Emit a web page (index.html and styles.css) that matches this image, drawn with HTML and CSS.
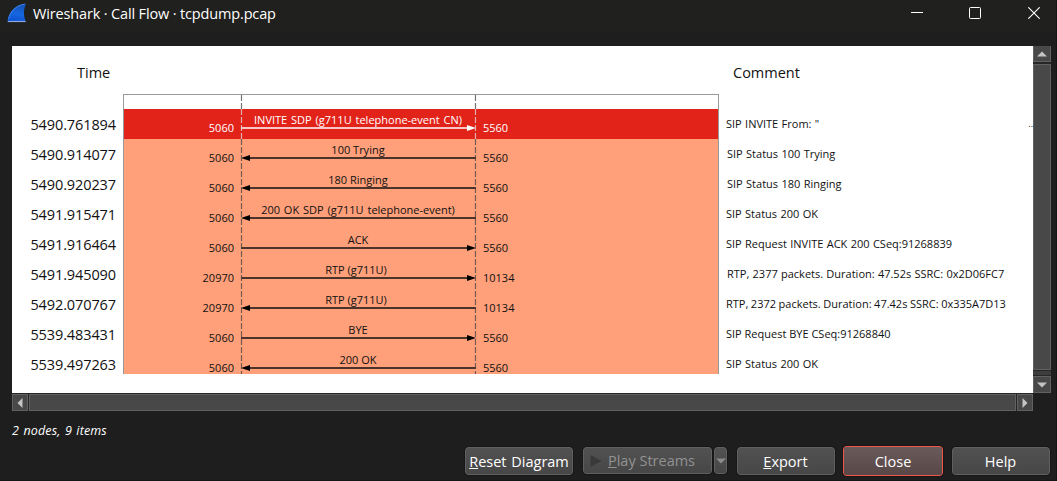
FILE: index.html
```html
<!DOCTYPE html>
<html lang="en">
<head>
<meta charset="utf-8">
<title>Wireshark · Call Flow · tcpdump.pcap</title>
<link rel="stylesheet" href="styles.css">
</head>
<body>
<div class="window">
  <header class="titlebar">
    <svg class="logo" width="20" height="20" viewBox="0 0 20 20"><defs><linearGradient id="fin" x1="0.6" y1="0" x2="0.4" y2="1"><stop offset="0" stop-color="#1450b4"/><stop offset=".55" stop-color="#1767e0"/><stop offset="1" stop-color="#0b4fd0"/></linearGradient></defs><path d="M.5 19C1.200 9.500 8 1.500 19.300.5C16.500 6 16 12 19 19Z" fill="url(#fin)"/><path d="M.8 18.500H18.600" stroke="#8fa9d8" stroke-width="1.200"/><path d="M1.500 16C3.500 8 9 2.500 17.500 1.200" fill="none" stroke="#4b8ff0" stroke-width=".8"/></svg>
    <h1 class="title">Wireshark · Call Flow · tcpdump.pcap</h1>
    <div class="controls">
      <svg width="12" height="12"><path d="M0 5.500H12" stroke="#fff"/></svg>
      <svg width="12" height="12"><rect x=".5" y=".5" width="11" height="11" rx="1" fill="none" stroke="#fff"/></svg>
      <svg width="12" height="12"><path d="M.3.300L11.700 11.700M11.700.300L.3 11.700" stroke="#fff" stroke-width="1.100"/></svg>
    </div>
  </header>

  <main class="view">
    <section class="diagram">
      <div class="heads"><span class="head-time">Time</span><span class="head-comment">Comment</span></div>
      <div class="flow">
        <div class="times">
          <span>5490.761894</span><span>5490.914077</span><span>5490.920237</span><span>5491.915471</span><span>5491.916464</span><span>5491.945090</span><span>5492.070767</span><span>5539.483431</span><span>5539.497263</span>
        </div>
        <div class="chart">
          <svg class="lifelines" width="240" height="280"><path class="life" d="M1.500 0V14M235.500 0V14M1.500 44V280M235.500 44V280"/><path class="life light" d="M1.500 14V44M235.500 14V44"/></svg>
          <div class="row selected"><span class="from">5060</span><div class="msg"><span class="m1">INVITE SDP (g711U telephone-event CN)</span><svg class="arrow" width="235" height="8"><path class="shaft" d="M0 4H229"/><path class="tip" d="M226 1L235 4L226 7Z"/></svg></div><span class="to">5560</span></div>
          <div class="row"><span class="from">5060</span><div class="msg"><span>100 Trying</span><svg class="arrow" width="235" height="8"><path class="shaft" d="M6 4H235"/><path class="tip" d="M9 1L0 4L9 7Z"/></svg></div><span class="to">5560</span></div>
          <div class="row"><span class="from">5060</span><div class="msg"><span>180 Ringing</span><svg class="arrow" width="235" height="8"><path class="shaft" d="M6 4H235"/><path class="tip" d="M9 1L0 4L9 7Z"/></svg></div><span class="to">5560</span></div>
          <div class="row"><span class="from">5060</span><div class="msg"><span class="m2">200 OK SDP (g711U telephone-event)</span><svg class="arrow" width="235" height="8"><path class="shaft" d="M6 4H235"/><path class="tip" d="M9 1L0 4L9 7Z"/></svg></div><span class="to">5560</span></div>
          <div class="row"><span class="from">5060</span><div class="msg"><span>ACK</span><svg class="arrow" width="235" height="8"><path class="shaft" d="M0 4H229"/><path class="tip" d="M226 1L235 4L226 7Z"/></svg></div><span class="to">5560</span></div>
          <div class="row"><span class="from">20970</span><div class="msg"><span class="m3">RTP (g711U)</span><svg class="arrow" width="235" height="8"><path class="shaft" d="M0 4H229"/><path class="tip" d="M226 1L235 4L226 7Z"/></svg></div><span class="to">10134</span></div>
          <div class="row"><span class="from">20970</span><div class="msg"><span class="m3">RTP (g711U)</span><svg class="arrow" width="235" height="8"><path class="shaft" d="M6 4H235"/><path class="tip" d="M9 1L0 4L9 7Z"/></svg></div><span class="to">10134</span></div>
          <div class="row"><span class="from">5060</span><div class="msg"><span>BYE</span><svg class="arrow" width="235" height="8"><path class="shaft" d="M0 4H229"/><path class="tip" d="M226 1L235 4L226 7Z"/></svg></div><span class="to">5560</span></div>
          <div class="row"><span class="from">5060</span><div class="msg"><span>200 OK</span><svg class="arrow" width="235" height="8"><path class="shaft" d="M6 4H235"/><path class="tip" d="M9 1L0 4L9 7Z"/></svg></div><span class="to">5560</span></div>
        </div>
        <div class="comments">
          <span class="split"><b>SIP INVITE From: "</b><b class="more">..</b></span><span class="nudge">SIP Status 100 Trying</span><span class="nudge">SIP Status 180 Ringing</span><span>SIP Status 200 OK</span><span>SIP Request INVITE ACK 200 CSeq:91268839</span><span class="nudge rtp">RTP, 2377 packets. Duration: 47.52s SSRC: 0x2D06FC7</span><span class="tight">RTP, 2372 packets. Duration: 47.42s SSRC: 0x335A7D13</span><span class="bye">SIP Request BYE CSeq:91268840</span><span>SIP Status 200 OK</span>
        </div>
      </div>
    </section>
    <div class="vbar">
      <div class="step up"><svg width="10" height="6"><path d="M0 5.500L5 .5L10 5.500Z"/></svg></div>
      <div class="thumb"></div>
      <div class="groove"></div>
      <div class="step down"><svg width="10" height="6"><path d="M0 .5L5 5.500L10 .5Z"/></svg></div>
    </div>
    <div class="hbar">
      <div class="step"><svg width="6" height="10"><path d="M5.500 0L.5 5L5.500 10Z"/></svg></div>
      <div class="thumb"></div>
      <div class="step"><svg width="6" height="10"><path d="M.5 0L5.500 5L.5 10Z"/></svg></div>
    </div>
  </main>

  <p class="status">2 nodes, 9 items</p>

  <footer class="buttons">
    <button class="btn reset"><span><u>R</u>eset Diagram</span></button>
    <button class="btn play"><svg width="12" height="12"><path d="M.5 0L11.500 6L.5 12Z"/></svg><span><u>P</u>lay Streams</span></button>
    <button class="btn drop"><svg width="10" height="6"><path d="M0 .5L5 5.500L10 .5Z"/></svg></button>
    <button class="btn export"><span><u>E</u>xport</span></button>
    <button class="btn close"><span>Close</span></button>
    <button class="btn help"><span>Help</span></button>
  </footer>
</div>
</body>
</html>
```
FILE: styles.css
```css
* { box-sizing: border-box; }
body { margin: 0; background: #1e1e1e; font-family: "Open Sans", "Noto Sans", sans-serif; }
svg { display: block; flex: none; }
.window { width: 1057px; height: 481px; overflow: hidden; display: flex; flex-direction: column; border-right: 1px solid #151515; border-bottom: 1px solid #151515; }

.titlebar { height: 32px; flex: none; display: flex; align-items: flex-start; padding: 3px 16px 0 7px; background: #20201e; }
.title { margin: 1px 0 0 6px; font-size: 14.5px; font-weight: 400; line-height: 20px; color: #fff; letter-spacing: -0.15px; white-space: nowrap; }
.controls { margin: 4px 0 0 auto; display: grid; grid-template-columns: 58px 59px 12px; }

.view { margin: 14px 0 0 12px; display: grid; grid-template-columns: 1021px 18px; grid-template-rows: 347px 18px; flex: none; }
.diagram { background: #fff; color: #111; overflow: hidden; }
.heads { display: flex; height: 48px; padding-top: 17px; font-size: 14.5px; line-height: 20px; }
.head-time { width: 656px; padding-left: 65px; }
.head-comment { padding-left: 65px; }
.flow { display: grid; grid-template-columns: 111px 596px 1fr; height: 280px; }
.times { padding-top: 15px; display: flex; flex-direction: column; }
.times span { height: 30px; flex: none; text-align: right; padding-right: 7px; line-height: 31px; font-size: 14.5px; letter-spacing: -0.1px; }
.chart { position: relative; padding-top: 14px; border: 1px solid #999; border-bottom: 0; height: 280px; overflow: hidden; }
.row { height: 30px; display: grid; grid-template-columns: 117px 235px 1fr; background: #ffa07a; color: #111; font-size: 11px; }
.row:last-child { height: 25px; }
.from, .to { line-height: 13px; height: 13px; margin-top: 12px; }
.from { text-align: right; padding-right: 7px; }
.to { padding-left: 7px; }
.msg { display: flex; flex-direction: column; align-items: center; white-space: nowrap; }
.msg span { line-height: 15px; height: 15px; margin-top: 3px; margin-right: 1px; }
.msg .m1 { word-spacing: 1px; }
.msg .m2 { word-spacing: 1px; }
.msg .m3 { margin-right: 0; margin-left: -6px; }
.msg .m3 { margin-left: 0; margin-right: 5px; }
.arrow { margin-top: -3px; }
.shaft { stroke: #111; stroke-width: 1.4; fill: none; }
.tip { fill: #000; }
.selected { background: #e2231a; color: #fff; }
.selected .shaft { stroke: #fff; }
.selected .tip { fill: #fff; }
.lifelines { position: absolute; left: 116px; top: 0; }
.life { fill: none; stroke: #444; stroke-width: 1.2; stroke-dasharray: 6 2; opacity: .75; }
.light { stroke: #ddd; }
.comments { padding-top: 15px; display: flex; flex-direction: column; font-size: 11px; white-space: nowrap; word-spacing: .5px; }
.comments span { height: 30px; flex: none; line-height: 30px; padding-left: 7px; }
.comments .nudge { padding-left: 8px; }
.comments .rtp { word-spacing: .4px; }
.comments .tight { word-spacing: -.3px; }
.comments .bye { word-spacing: 0; }
.comments b { font-weight: 400; }
.comments .more { font-size: 9px; }
.comments .split { display: flex; justify-content: space-between; }

.vbar { background: #262626; display: flex; flex-direction: column; }
.step, .thumb { background: #484848; border: 1px solid #616161; }
.step { display: flex; align-items: center; justify-content: center; flex: none; }
.step svg { fill: #c4c4c4; }
.up { height: 16px; margin-bottom: 2px; border-top: 0; }
.vbar .thumb { height: 306px; }
.groove { height: 4px; margin: 1px 0; background: #3d3d3d; }
.down { height: 17px; }
.hbar { background: #262626; display: flex; padding-top: 1px; }
.hbar .step { width: 16px; }
.hbar .thumb { flex: 1; margin: 0 1px; }

.status { margin: 11px 0 0 12px; height: 18px; line-height: 18px; font-size: 12.5px; letter-spacing: .15px; word-spacing: 1px; font-style: italic; color: #fff; flex: none; }
.buttons { margin: 6px 0 0 465px; display: flex; align-items: flex-start; flex: none; }
.btn { height: 28px; margin: 1px 0 0; padding: 1px 0 0; border: 1px solid #606060; border-radius: 3px; background: linear-gradient(#515151, #474747); color: #fff; font: 14.5px/20px "Open Sans", "Noto Sans", sans-serif; display: flex; align-items: center; justify-content: center; white-space: nowrap; outline: 1px solid #171717; }
.reset { width: 108px; word-spacing: 1px; }
.play { width: 129px; height: 27px; margin-left: 10px; color: #929292; padding-right: 10px; gap: 6px; }
.play svg { fill: #393939; }
.drop { width: 13px; height: 27px; margin-left: 2px; }
.drop svg { fill: #8b8b8b; }
.export { width: 98px; margin-left: 10px; padding-right: 1px; }
.close { width: 100px; height: 30px; margin: 0 0 0 8px; border-color: #f2554a; background: linear-gradient(#6a5a5a, #574747); }
.help { width: 98px; margin-left: 9px; padding-right: 1px; }
```
